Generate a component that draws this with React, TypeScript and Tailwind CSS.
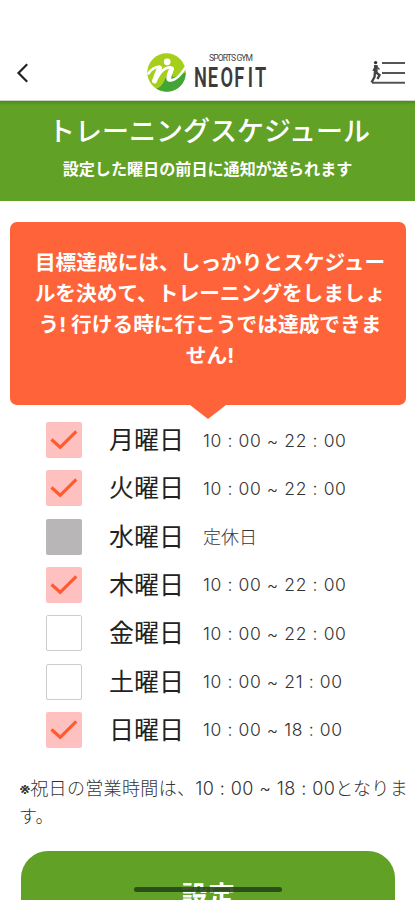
import clsx from 'clsx';
import { useState } from 'react';

type Day = {
  name: string;
  hours: string;
  closed?: boolean;
};

const days: Day[] = [
  { name: '月曜日', hours: '10 : 00 ~ 22 : 00' },
  { name: '火曜日', hours: '10 : 00 ~ 22 : 00' },
  { name: '水曜日', hours: '定休日', closed: true },
  { name: '木曜日', hours: '10 : 00 ~ 22 : 00' },
  { name: '金曜日', hours: '10 : 00 ~ 22 : 00' },
  { name: '土曜日', hours: '10 : 00 ~ 21 : 00' },
  { name: '日曜日', hours: '10 : 00 ~ 18 : 00' },
];

const adviceLines = [
  '目標達成には、しっかりとスケジュー',
  'ルを決めて、トレーニングをしましょ',
  'う! 行ける時に行こうでは達成できま',
  'せん!',
];

const Logo = () => (
  <svg width="124" height="42" viewBox="0 0 124 42" aria-label="NEOFIT">
    <circle cx="21.5" cy="21.5" r="19.2" fill="#a5cf1b" />
    <path d="M11 37.5c8-1 9-13 15-19l2 8 12.7-5c.6 13-13 25-29.7 16z" fill="#42a535" />
    <circle cx="22.2" cy="10.8" r="3.4" fill="#fff" />
    <g fill="none" stroke="#fff" strokeLinecap="round" strokeLinejoin="round">
      <path d="M3.5 22.5c2.5-4 6-6.6 11-6.8" strokeWidth="2.6" />
      <path d="M14.5 17 9.5 30" strokeWidth="5" />
      <path d="M12 27c3-5 6.5-10.5 13.5-10.8" strokeWidth="2.6" />
      <path d="M26.5 18c-1 4-3.5 7-2.5 10" strokeWidth="5" />
      <path d="M24.5 29.5C31 30 36 23 40.5 16.5" strokeWidth="2.4" />
    </g>
    <text
      x="64"
      y="10"
      fontSize="8.5"
      fill="#444"
      fontFamily="Roboto, sans-serif"
      textLength="44"
      lengthAdjust="spacing"
      transform="translate(0 .3)"
    >
      SPORTS GYM
    </text>
    <g transform="translate(49 36) scale(.64 1)">
      <text
        x="0 21.3 41.5 63 84 95.5"
        y="0"
        fontSize="28.5"
        fontWeight="600"
        fill="#3e3a3b"
        fontFamily="Roboto, sans-serif"
      >
        NEOFIT
      </text>
    </g>
  </svg>
);

const MenuIcon = () => (
  <svg width="36" height="26" viewBox="0 0 36 26" fill="none" stroke="#444">
    <path d="M12 3h23M12 13h23M2 22.7h33" stroke="#555" strokeWidth="2" />
    <circle cx="5.6" cy="2.6" r="1.7" fill="#333" stroke="none" />
    <path d="M5.8 5v8" strokeWidth="3.6" />
    <path d="M6 6l3.5 3.5M5 7l-2 4" strokeWidth="1.4" />
    <path d="M5.5 12l4 3-2 4M5 12l-.5 5-3 5.500" strokeWidth="2.4" />
  </svg>
);

const Header = () => (
  <header className="grid h-[101px] grid-cols-3 items-end border-b border-[#cfd6c8] pb-[7px]">
    <button aria-label="戻る" className="mb-[9px] ml-4 w-fit">
      <svg width="13" height="22" viewBox="0 0 13 22" fill="none" stroke="#222" strokeWidth="2.2">
        <path d="M11.2 2.2 2.5 11l8.7 8.8" />
      </svg>
    </button>
    <div className="flex justify-center">
      <Logo />
    </div>
    <button aria-label="メニュー" className="mr-[9px] mb-[7px] justify-self-end">
      <MenuIcon />
    </button>
  </header>
);

type DayRowProps = {
  day: Day;
  checked: boolean;
  onToggle: () => void;
};

const DayRow = ({ day, checked, onToggle }: DayRowProps) => (
  <li className="flex h-[48.3px] items-center">
    <button
      role="checkbox"
      aria-checked={checked}
      aria-label={day.name}
      disabled={day.closed}
      onClick={onToggle}
      className={clsx(
        'flex size-9 shrink-0 items-center justify-center rounded-[2px]',
        day.closed && 'bg-[#b8b6b6]',
        !day.closed && checked && 'bg-[#ffc1c0]',
        !day.closed && !checked && 'border border-[#ccc] bg-white'
      )}
    >
      {checked && (
        <svg width="28" height="22" viewBox="0 0 28 22" fill="none" stroke="#ff5a30" strokeWidth="3.2">
          <path d="M1.5 10.5 10.2 18.3 26.3 2.3" />
        </svg>
      )}
    </button>
    <span className="mt-px ml-[27px] w-[94px] text-[25px] leading-none">{day.name}</span>
    <span
      className={clsx(
        'mt-px font-light text-[#333]',
        day.closed ? 'text-[18px]' : 'text-[17.5px] tracking-[0.6px]'
      )}
    >
      {day.hours}
    </span>
  </li>
);

export default function App() {
  const [selected, setSelected] = useState<string[]>(['月曜日', '火曜日', '木曜日', '日曜日']);

  const toggle = (name: string) => {
    setSelected((prev) => (prev.includes(name) ? prev.filter((n) => n !== name) : [...prev, name]));
  };

  return (
    <div className="relative h-[900px] w-[415px] overflow-hidden bg-white font-[Inter,'Noto_Sans_CJK_JP',sans-serif] text-[#222]">
      <Header />

      <section className="h-[100px] bg-[#60a126] bg-linear-to-b from-[#4b8a1b] to-[#60a126] to-[4px] pt-[13px] text-center text-white">
        <h1 className="pl-[3px] text-[27px] leading-9 font-medium">トレーニングスケジュール</h1>
        <p className="mt-2 text-[16.1px] leading-[22px] font-bold">設定した曜日の前日に通知が送られます</p>
      </section>

      <section className="relative mt-[21px] mr-[9px] ml-[10px] h-[183px] rounded-[7px] bg-[#ff6339] pt-[25px] pl-1 text-center text-[20.7px] leading-[31px] font-bold whitespace-nowrap text-white">
        {adviceLines.map((line) => (
          <p key={line}>{line}</p>
        ))}
        <span className="absolute top-full left-[180px] h-[14px] w-9 bg-[#ff6339] [clip-path:polygon(0_0,100%_0,50%_100%)]" />
      </section>

      <ul className="mt-[11px] ml-[46px]">
        {days.map((day) => (
          <DayRow
            key={day.name}
            day={day}
            checked={selected.includes(day.name)}
            onToggle={() => toggle(day.name)}
          />
        ))}
      </ul>

      <p className="mt-[21px] ml-[19px] text-[18px] leading-7 font-light tracking-[0.35px] whitespace-nowrap text-[#333]">
        <span className="mr-[-1px] text-[17px] font-medium">※</span>
        祝日の営業時間は、
        <span className="tracking-[0.4px]">10 : 00 ~ 18 : 00</span>
        となりま
        <br />
        す。
      </p>

      <button className="mt-5 ml-[21px] h-[90px] w-[374px] rounded-[27px] bg-[#60a126] text-[27px] leading-none font-bold text-white">
        設定
      </button>

      <div className="absolute bottom-2 left-[134px] h-[5px] w-[148px] rounded-full bg-[#26451b]/90" />
    </div>
  );
}
